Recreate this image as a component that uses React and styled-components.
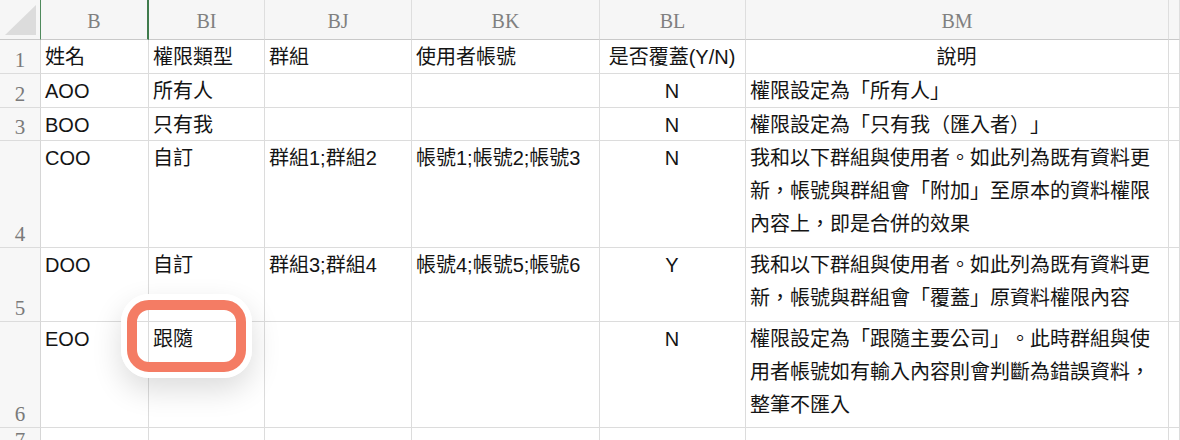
import React from 'react'
import styled, { createGlobalStyle } from 'styled-components'

const GlobalStyle = createGlobalStyle`
  html, body {
    margin: 0;
    padding: 0;
    background: #fff;
    overflow: hidden;
  }
  body {
    font-family: "Liberation Sans", "Noto Sans CJK TC", sans-serif;
    color: #141414;
    text-spacing-trim: space-all;
  }
`

const columns = [
  { id: 'B', width: 108 },
  { id: 'BI', width: 116 },
  { id: 'BJ', width: 147 },
  { id: 'BK', width: 188 },
  { id: 'BL', width: 146 },
  { id: 'BM', width: 423 },
  { id: '', width: 0 },
]

const rows = [
  { n: 1, h: 34, cells: ['姓名', '權限類型', '群組', '使用者帳號', '是否覆蓋(Y/N)', ['說明']], header: true },
  { n: 2, h: 34, cells: ['AOO', '所有人', '', '', 'N', ['權限設定為「所有人」']] },
  { n: 3, h: 33, cells: ['BOO', '只有我', '', '', 'N', ['權限設定為「只有我（匯入者）」']] },
  {
    n: 4,
    h: 107,
    cells: [
      'COO',
      '自訂',
      '群組1;群組2',
      '帳號1;帳號2;帳號3',
      'N',
      ['我和以下群組與使用者。如此列為既有資料更', '新，帳號與群組會「附加」至原本的資料權限', '內容上，即是合併的效果'],
    ],
  },
  {
    n: 5,
    h: 74,
    cells: [
      'DOO',
      '自訂',
      '群組3;群組4',
      '帳號4;帳號5;帳號6',
      'Y',
      ['我和以下群組與使用者。如此列為既有資料更', '新，帳號與群組會「覆蓋」原資料權限內容'],
    ],
  },
  {
    n: 6,
    h: 106,
    cells: [
      'EOO',
      '跟隨',
      '',
      '',
      'N',
      ['權限設定為「跟隨主要公司」。此時群組與使', '用者帳號如有輸入內容則會判斷為錯誤資料，', '整筆不匯入'],
    ],
  },
  { n: 7, h: 26, cells: ['', '', '', '', '', ['']] },
]

const Sheet = styled.div`
  position: relative;
  display: grid;
  grid-template-columns: 41px ${columns.slice(0, -1).map((c) => `${c.width}px`).join(' ')} 1fr;
  grid-template-rows: 40px ${rows.map((r) => `${r.h}px`).join(' ')};
  width: 1180px;
  height: 440px;
  overflow: hidden;
`

const Corner = styled.div`
  position: relative;
  background: #f6f6f6;
  border-right: 1px solid #4f8a5c;
  border-bottom: 1px solid #c9c9c9;
  box-sizing: border-box;
`

const Triangle = styled.div`
  position: absolute;
  left: 5px;
  top: 5px;
  width: 31px;
  height: 30px;
  background: #dcdcdc;
  clip-path: polygon(100% 0, 100% 100%, 0 100%);
`

const ColHead = styled.div`
  display: flex;
  align-items: center;
  justify-content: center;
  padding-top: 4px;
  box-sizing: border-box;
  background: #f6f6f6;
  border-bottom: 1px solid #c9c9c9;
  border-right: ${(p) => (p.$selected ? '2px solid #3f7b4c' : '1px solid #dedede')};
  font-family: "Liberation Serif", "DejaVu Serif", serif;
  font-size: 20px;
  color: #808080;
`

const RowHead = styled.div`
  display: flex;
  align-items: flex-end;
  justify-content: center;
  padding-bottom: 1px;
  box-sizing: border-box;
  background: #f7f7f7;
  border-right: 1px solid #d6d6d6;
  border-bottom: 1px solid #dcdcdc;
  font-family: "Liberation Serif", "DejaVu Serif", serif;
  font-size: 21px;
  line-height: 24px;
  color: #7a7a7a;
`

const Cell = styled.div`
  box-sizing: border-box;
  padding: 1px 5px 0 4px;
  border-right: 1px solid #dcdcdc;
  border-bottom: 1px solid #dcdcdc;
  font-size: 20px;
  line-height: 33px;
  text-align: ${(p) => p.$align || 'left'};
  white-space: nowrap;
  overflow: hidden;
`

const Highlight = styled.div`
  position: absolute;
  left: 121px;
  top: 294px;
  width: 131px;
  height: 84px;
  box-sizing: border-box;
  border: 6px solid #fff;
  border-radius: 28px;
  box-shadow: 0 12px 30px rgba(0, 0, 0, 0.14);
  pointer-events: none;
`

const Ring = styled.div`
  width: 100%;
  height: 100%;
  box-sizing: border-box;
  border: 10px solid #f47c64;
  border-radius: 22px;
`

export default function App() {
  return (
    <>
      <GlobalStyle />
      <Sheet>
        <Corner>
          <Triangle />
        </Corner>
        {columns.map((c) => (
          <ColHead key={c.id || 'rest'} $selected={c.id === 'B'}>
            {c.id}
          </ColHead>
        ))}
        {rows.map((r) => (
          <React.Fragment key={r.n}>
            <RowHead>{r.n}</RowHead>
            {r.cells.map((v, i) => {
              const isNote = Array.isArray(v)
              const align = i === 4 || (isNote && r.header) ? 'center' : 'left'
              return (
                <Cell key={i} $align={align}>
                  {isNote
                    ? v.map((line, j) => (
                        <React.Fragment key={j}>
                          {j > 0 && <br />}
                          {line}
                        </React.Fragment>
                      ))
                    : v}
                </Cell>
              )
            })}
            <Cell />
          </React.Fragment>
        ))}
        <Highlight>
          <Ring />
        </Highlight>
      </Sheet>
    </>
  )
}
